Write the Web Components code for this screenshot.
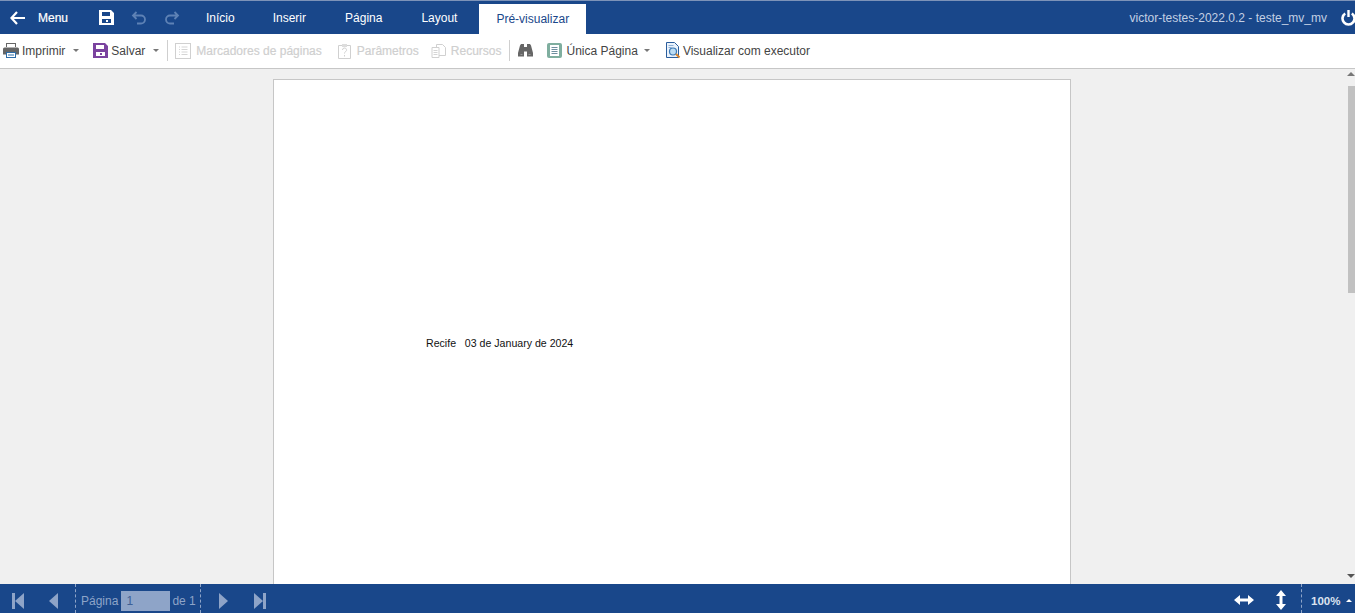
<!DOCTYPE html>
<html>
<head>
<meta charset="utf-8">
<title>Pré-visualizar</title>
<style>
  html, body { margin: 0; height: 100%; overflow: hidden; }
  body { font-family: "Liberation Sans", Arial, sans-serif; font-size: 12px; }
</style>
</head>
<body>
<report-app></report-app>

<script>
class TopBar extends HTMLElement {
  constructor() {
    super();
    this._shadowRoot = this.attachShadow({ mode: 'open' });
    this._shadowRoot.innerHTML = `
      <style>
        :host{
          display: flex;
          align-items: stretch;
          height: 34px;
          box-sizing: border-box;
          background: #19478a;
          border-top: 1px solid #7d93b8;
          color: #fff;
          font-size: 12px;
          flex: none;
        }
        .back{ display: flex; align-items: center; padding-left: 10px; width: 95px; box-sizing: border-box; }
        .back svg{ margin-right: 13px; }
        .back span{ -webkit-text-stroke: .2px #fff; }
        .tools{ display: flex; align-items: center; width: 92px; padding-left: 4px; box-sizing: border-box; gap: 17px; }
        .tabs{ display: flex; align-items: stretch; padding-top: 3px; }
        .tab{ padding: 0 19px 2px; display: flex; align-items: center; }
        .tab.wide{ padding-right: 20px; }
        .tab.active{ background: #fff; color: #19478a; margin-left: 3px; padding: 0 17px 0; }
        .right{ margin-left: auto; display: flex; align-items: center; color: #c3d0e4; }
        .right span{ margin-right: 14px; }
        .right svg{ margin-right: -1px; }
      </style>
      <div class="back">
        <svg width="15" height="14" viewBox="0 0 15 14"><path d="M7 1 1.500 7 7 13M2 7h13" fill="none" stroke="#fff" stroke-width="2.200"/></svg>
        <span>Menu</span>
      </div>
      <div class="tools">
        <svg width="15" height="15" viewBox="0 0 15 15"><path fill-rule="evenodd" fill="#fff" d="M0 0h12l3 3v12H0zM3 2v4h8V2zM3 9v4h9V9zM7 10h2v2H7z"/></svg>
        <svg width="16" height="14" viewBox="0 0 16 14"><path d="M5.500 1 2 4.500 5.500 8M2.500 4.500H10a3.600 3.600 0 0 1 0 8H6" fill="none" stroke="#5e82b5" stroke-width="1.800"/></svg>
        <svg width="16" height="14" viewBox="0 0 16 14"><path d="M10.500 1 14 4.500 10.500 8M13.500 4.500H6a3.600 3.600 0 0 0 0 8h4" fill="none" stroke="#5e82b5" stroke-width="1.800"/></svg>
      </div>
      <nav class="tabs">
        <div class="tab">Início</div>
        <div class="tab wide">Inserir</div>
        <div class="tab wide">Página</div>
        <div class="tab">Layout</div>
        <div class="tab active">Pré-visualizar</div>
      </nav>
      <div class="right">
        <span>victor-testes-2022.0.2 - teste_mv_mv</span>
        <svg width="15" height="16" viewBox="0 0 15 16"><path d="M4.200 3.500a6 6 0 1 0 6.600 0" fill="none" stroke="#fff" stroke-width="2.600"/><path d="M7.500 0v7" stroke="#fff" stroke-width="2.400"/></svg>
      </div>
    `;
  }
}
customElements.define('top-bar', TopBar);

class ToolButton extends HTMLElement {
  constructor() {
    super();
    this._shadowRoot = this.attachShadow({ mode: 'open' });
    this._shadowRoot.innerHTML = `
      <style>
        :host{ display: inline-flex; align-items: center; color: #444; height: 100%; white-space: nowrap; }
        :host([disabled]){ color: #cfcfcf; -webkit-text-stroke: .2px #cfcfcf; }
        .icon{ display: flex; margin-right: var(--icon-gap, 3px); }
        :host([disabled]) .icon{ margin-right: var(--icon-gap, 5px); }
        .caret{ display: none; margin-left: var(--caret-gap, 8px); width: 0; height: 0; border: 3px solid transparent; border-top: 3px solid #777; border-bottom: 0; }
        :host([caret]) .caret{ display: block; }
      </style>
      <span class="icon"><slot name="icon"></slot></span>
      <slot></slot>
      <span class="caret"></span>
    `;
  }
}
customElements.define('tool-button', ToolButton);

class ToolBar extends HTMLElement {
  constructor() {
    super();
    this._shadowRoot = this.attachShadow({ mode: 'open' });
    this._shadowRoot.innerHTML = `
      <style>
        :host{
          display: flex;
          align-items: center;
          height: 35px;
          box-sizing: border-box;
          background: #fff;
          border-bottom: 1px solid #c6c6c6;
          padding: 0 0 1px 3px;
          flex: none;
        }
      </style>
      <slot></slot>
    `;
  }
}
customElements.define('tool-bar', ToolBar);

class ToolSep extends HTMLElement {
  constructor() {
    super();
    this._shadowRoot = this.attachShadow({ mode: 'open' });
    this._shadowRoot.innerHTML = `
      <style>
        :host{ display: block; width: 1px; height: 21px; background: #cfcfcf; }
      </style>
    `;
  }
}
customElements.define('tool-sep', ToolSep);

class ReportPage extends HTMLElement {
  constructor() {
    super();
    this._shadowRoot = this.attachShadow({ mode: 'open' });
    this._shadowRoot.innerHTML = `
      <style>
        :host{
          display: block;
          width: 798px;
          height: 560px;
          box-sizing: border-box;
          margin: 10px 0 0 273px;
          background: #fff;
          border: 1px solid #c6c6c6;
          padding: 256px 0 0 152px;
          color: #111;
          font-size: 10.600px;
          line-height: 14px;
        }
        .line{ white-space: pre; }
      </style>
      <div class="line"><slot></slot></div>
    `;
  }
}
customElements.define('report-page', ReportPage);

class ScrollTrack extends HTMLElement {
  constructor() {
    super();
    this._shadowRoot = this.attachShadow({ mode: 'open' });
    this._shadowRoot.innerHTML = `
      <style>
        :host{ display: block; position: absolute; top: 0; right: 0; bottom: 0; width: 7px; }
        .thumb{ position: absolute; top: 17px; left: 0; right: 0; height: 207px; background: #c1c1c1; }
        .up, .down{ position: absolute; right: 0; width: 0; height: 0; border: 4px solid transparent; }
        .up{ top: 3px; border-top: 0; border-bottom: 4px solid #777; }
        .down{ bottom: 6px; border-bottom: 0; border-top: 4px solid #555; }
      </style>
      <div class="up"></div>
      <div class="thumb"></div>
      <div class="down"></div>
    `;
  }
}
customElements.define('scroll-track', ScrollTrack);

class StatusBar extends HTMLElement {
  constructor() {
    super();
    this._shadowRoot = this.attachShadow({ mode: 'open' });
    this._shadowRoot.innerHTML = `
      <style>
        :host{
          display: flex;
          align-items: stretch;
          height: 29px;
          background: #19478a;
          color: #8ea4c8;
          font-size: 12px;
          flex: none;
        }
        .nav{ display: flex; align-items: center; padding-top: 4px; }
        .nav.first{ width: 75px; padding-left: 12px; box-sizing: border-box; gap: 25px; }
        .pager{ display: flex; align-items: center; width: 126px; box-sizing: border-box; padding: 4px 0 0 5px;
          border-left: 1px dashed #8ea4c8; border-right: 1px dashed #8ea4c8; }
        .num{ width: 49px; height: 20px; line-height: 20px; background: #8ea4c8; color: #3d5f95; margin: 0 2px 0 3px; padding-left: 5px; box-sizing: border-box; }
        .nav.last{ padding-left: 18px; gap: 26px; }
        .right{ margin-left: auto; display: flex; align-items: center; color: #fff; }
        .fit{ display: flex; align-items: center; gap: 21px; margin-right: 14px; padding-top: 3px; }
        .zoom{ display: flex; align-items: center; align-self: stretch; border-left: 1px dashed #8ea4c8; padding: 4px 0 0 9px; width: 44px; color: #dbe3ef; font-weight: bold; font-size: 11.500px; }
        .zoom i{ display: block; width: 0; height: 0; margin-left: 6px; border: 3px solid transparent; border-top: 0; border-bottom: 3px solid #fff; }
      </style>
      <div class="nav first">
        <svg width="12" height="16" viewBox="0 0 12 16"><path fill="#8ea4c8" d="M0 0h3v16H0zM12 0v16L3 8z"/></svg>
        <svg width="9" height="16" viewBox="0 0 9 16"><path fill="#8ea4c8" d="M9 0v16L0 8z"/></svg>
      </div>
      <div class="pager">Página<div class="num">1</div>de 1</div>
      <div class="nav last">
        <svg width="9" height="16" viewBox="0 0 9 16"><path fill="#8ea4c8" d="M0 0v16l9-8z"/></svg>
        <svg width="12" height="16" viewBox="0 0 12 16"><path fill="#8ea4c8" d="M0 0v16l9-8zM9 0h3v16H9z"/></svg>
      </div>
      <div class="right">
        <div class="fit">
          <svg width="20" height="12" viewBox="0 0 20 12"><path fill="#fff" d="M6 1v3.500h8V1l6 5-6 5V7.500H6V11L0 6z"/></svg>
          <svg width="12" height="20" viewBox="0 0 12 20"><path fill="#fff" d="M1 6h3.500v8H1l5 6 5-6H7.500V6H11L6 0z"/></svg>
        </div>
        <div class="zoom">100%<i></i></div>
      </div>
    `;
  }
}
customElements.define('status-bar', StatusBar);

class ReportApp extends HTMLElement {
  constructor() {
    super();
    this._shadowRoot = this.attachShadow({ mode: 'open' });
    this._shadowRoot.innerHTML = `
      <style>
        :host{
          display: flex;
          flex-direction: column;
          height: 613px;
          font-family: "Liberation Sans", Arial, sans-serif;
          font-size: 12px;
        }
        .view{ flex: 1; min-height: 0; background: #f0f0f0; overflow: hidden; position: relative; }
        tool-button{ height: 33px; }
        .ml-14{ margin-left: 14px; }
        .ml-8{ margin-left: 8px; }
        .ml-7{ margin-left: 7px; }
        .ml-15{ margin-left: 15px; }
        .ml-12{ margin-left: 12px; }
        .ml-17{ margin-left: 17px; }
      </style>
      <top-bar></top-bar>
      <tool-bar>
        <tool-button caret>
          <svg slot="icon" width="16" height="15" viewBox="0 0 16 15">
            <path fill="#666" d="M3 0h10v4H3zM1.500 4.500h13A1.500 1.500 0 0 1 16 6v5.500h-3V9H3v2.500H0V6a1.500 1.500 0 0 1 1.500-1.500z"/>
            <path fill="#fff" d="M4 1h8v3H4z"/>
            <rect x="3.500" y="9.500" width="9" height="5" fill="#fff" stroke="#2d6ca8"/>
            <path d="M5 12h6" stroke="#2d6ca8"/>
          </svg>
          Imprimir
        </tool-button>
        <tool-button caret class="ml-14">
          <svg slot="icon" width="15" height="15" viewBox="0 0 15 15"><path fill-rule="evenodd" fill="#7b439f" d="M0 0h12l3 3v12H0zM3 2v4h8V2zM3 9v4h9V9zM7 10h2v2H7z"/></svg>
          Salvar
        </tool-button>
        <tool-sep class="ml-8"></tool-sep>
        <tool-button disabled class="ml-7">
          <svg slot="icon" width="16" height="16" viewBox="0 0 16 16"><rect x=".5" y=".5" width="15" height="15" fill="#fff" stroke="#d0d0d0"/><path d="M4 4h1M6.500 4h6M4 6.500h1M6.500 6.500h6M4 9h1M6.500 9h6M4 11.500h1M6.500 11.500h6" stroke="#d5d5d5"/></svg>
          Marcadores de páginas
        </tool-button>
        <tool-button disabled class="ml-15">
          <svg slot="icon" width="15" height="16" viewBox="0 0 15 16"><path d="M1.500 2.500h12v13h-12z" fill="#fff" stroke="#d0d0d0"/><path d="M5 1h5v3H5z" fill="#ddd"/><path d="M5.500 7a2 2 0 1 1 3 1.700c-.7.500-1 .8-1 1.800M7.500 12v1.500" fill="none" stroke="#d0d0d0"/></svg>
          Parâmetros
        </tool-button>
        <tool-button disabled class="ml-12" style="--icon-gap:4px">
          <svg slot="icon" width="16" height="16" viewBox="0 0 16 16"><path d="M5.500 1.500h6l3 3v8h-9z" fill="#fff" stroke="#d0d0d0"/><path d="M1 4.500h7v10H1z" fill="#fff" stroke="#d0d0d0"/><path d="M2.500 7.500h4M2.500 9.500h4M2.500 11.500h4" stroke="#d5d5d5"/></svg>
          Recursos
        </tool-button>
        <tool-sep class="ml-8"></tool-sep>
        <svg width="15" height="13" viewBox="0 0 15 13" style="margin-left:8px"><path fill="#666" d="M2 1.500 3 0h3v3h3V0h3l1 1.500L15 9v3.500H9V7.500H6v5H0V9z"/><path d="M2.500 10.500h2M10.500 10.500h2" stroke="#999"/></svg>
        <tool-button caret class="ml-14" style="--icon-gap:3px;--caret-gap:6px">
          <svg slot="icon" width="16" height="16" viewBox="0 0 16 16"><rect width="15" height="15" rx="2" fill="#7fae9f"/><rect x="3" y="2" width="9" height="11" fill="#fff"/><path d="M4.500 4.500h6M4.500 6.500h6M4.500 8.500h6M4.500 10.500h6" stroke="#6f8f9f"/></svg>
          Única Página
        </tool-button>
        <tool-button class="ml-16" style="--icon-gap:2px;margin-left:16px">
          <svg slot="icon" width="15" height="17" viewBox="0 0 15 17"><path d="M.5.500h8l4 4v11H.5z" fill="#eaf2fb" stroke="#2a5d9c"/><path d="M2.500 3.500h5M2.500 5.500h3" stroke="#8fb0d6"/><circle cx="7" cy="9.500" r="3.500" fill="#bcdcf2" stroke="#3a78b5" stroke-width="1.200"/><path d="M10 12l3.500 3.500" stroke="#d8842a" stroke-width="2"/></svg>
          Visualizar com executor
        </tool-button>
      </tool-bar>
      <div class="view">
        <report-page>Recife   03 de January de 2024</report-page>
        <scroll-track></scroll-track>
      </div>
      <status-bar></status-bar>
    `;
  }
}
customElements.define('report-app', ReportApp);
</script>
</body>
</html>
